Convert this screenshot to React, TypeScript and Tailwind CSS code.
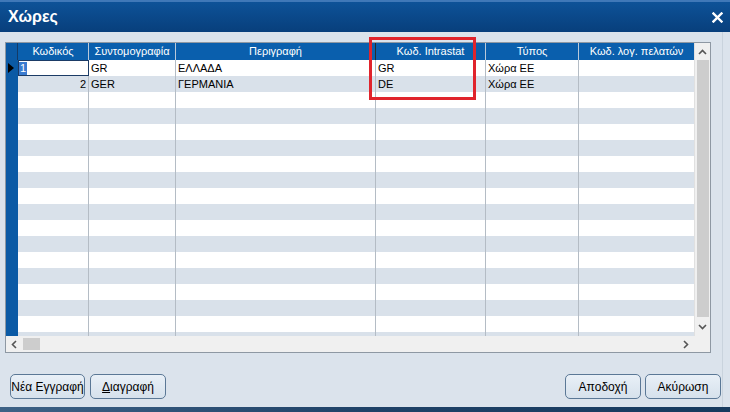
import React from "react";

const cols = [
  { w: 71, title: "Κωδικός" },
  { w: 87, title: "Συντομογραφία" },
  { w: 200, title: "Περιγραφή" },
  { w: 110, title: "Κωδ. Intrastat" },
  { w: 93, title: "Τύπος" },
  { w: 115, title: "Κωδ. λογ. πελατών" },
];

const data: string[][] = [
  ["1", "GR", "ΕΛΛΑΔΑ", "GR", "Χώρα ΕΕ", ""],
  ["2", "GER", "ΓΕΡΜΑΝΙΑ", "DE", "Χώρα ΕΕ", ""],
];

function Btn({ children, w }: { children: React.ReactNode; w: string }) {
  return (
    <div
      className={`${w} h-[25px] rounded-[5px] border border-[#5b7896] bg-gradient-to-b from-[#e9f0f7] to-[#d6e1ec] flex items-center justify-center text-[12px] text-black`}
    >
      {children}
    </div>
  );
}

export default function App() {
  const rows = Array.from({ length: 18 }, (_, i) => i);
  return (
    <div
      className="w-[730px] h-[412px] bg-[#dbe3ec] flex flex-col overflow-hidden"
      style={{ fontFamily: '"Liberation Sans", Arial, sans-serif' }}
    >
      {/* Title bar */}
      <div className="h-[32px] shrink-0 border-t-2 border-[#3f78b8] bg-gradient-to-b from-[#0d5298] to-[#083f7c] flex items-center justify-between pl-[8px] pr-[7px]">
        <span className="text-white font-bold text-[16px] leading-none">Χώρες</span>
        <svg width="11" height="11" viewBox="0 0 11 11">
          <path d="M1.5 1.5 L9.5 9.5 M9.5 1.5 L1.5 9.5" stroke="white" strokeWidth="2.4" strokeLinecap="square" />
        </svg>
      </div>

      {/* Body */}
      <div className="flex-1 flex flex-col pl-[5px] pt-[10px] border-r border-[#c9d3dd] mr-[7px]">
        {/* Grid */}
        <div className="relative w-[706px] h-[311px] border border-[#8e98a3] bg-white flex flex-col">
          <div className="flex h-[293px]">
            <div className="w-[688px] flex flex-col overflow-hidden">
              {/* Header */}
              <div className="flex h-[17px] shrink-0 bg-[#0a5fad] text-white text-[11px]">
                <div className="w-[12px] shrink-0 bg-[#0b5aa5] border-r border-[#143a66]" />
                {cols.map((c, i) => (
                  <div
                    key={i}
                    style={{ width: c.w }}
                    className={`shrink-0 flex items-center justify-center leading-none whitespace-nowrap overflow-hidden ${
                      i < cols.length - 1 ? (i === 2 ? "border-r border-[#2a2a2a]" : "border-r border-[#b9c9da]") : ""
                    }`}
                  >
                    {c.title}
                  </div>
                ))}
              </div>
              {/* Rows */}
              {rows.map((r) => {
                const d = data[r];
                return (
                  <div
                    key={r}
                    className={`flex h-[16px] shrink-0 text-[11px] text-black ${r % 2 === 0 ? "bg-white" : "bg-[#d9e1ea]"}`}
                  >
                    <div className="w-[12px] shrink-0 bg-[#0b5aa5] flex items-center pl-[2px]">
                      {r === 0 && (
                        <svg width="6" height="10" viewBox="0 0 6 10">
                          <path d="M0 0 L6 5 L0 10 Z" fill="black" />
                        </svg>
                      )}
                    </div>
                    {cols.map((c, i) => {
                      const txt = d ? d[i] : "";
                      if (r === 0 && i === 0) {
                        return (
                          <div
                            key={i}
                            style={{ width: c.w }}
                            className="shrink-0 border border-[#1b3b66] flex items-center pl-[0px] bg-white"
                          >
                            <span className="bg-[#3a7bd0] text-white leading-[13px] px-[1px]">{txt}</span>
                          </div>
                        );
                      }
                      return (
                        <div
                          key={i}
                          style={{ width: c.w }}
                          className={`shrink-0 flex items-center leading-none whitespace-nowrap overflow-hidden px-[2px] ${
                            i === 0 ? "justify-end" : "justify-start"
                          } ${i < cols.length - 1 ? "border-r border-[#b4bcc5]" : ""}`}
                        >
                          {txt}
                        </div>
                      );
                    })}
                  </div>
                );
              })}
            </div>
            {/* Vertical scrollbar */}
            <div className="w-[16px] flex flex-col bg-[#f0f0f0] border-l border-[#e0e0e0]">
              <div className="h-[17px] flex items-center justify-center">
                <svg width="9" height="6" viewBox="0 0 9 6">
                  <path d="M1 5 L4.5 1.5 L8 5" stroke="#555" strokeWidth="1.6" fill="none" />
                </svg>
              </div>
              <div className="flex-1 flex justify-center">
                <div className="w-[12px] h-[257px] bg-[#cdcdcd]" />
              </div>
              <div className="h-[18px] flex items-center justify-center">
                <svg width="9" height="6" viewBox="0 0 9 6">
                  <path d="M1 1 L4.5 4.5 L8 1" stroke="#555" strokeWidth="1.6" fill="none" />
                </svg>
              </div>
            </div>
          </div>
          {/* Horizontal scrollbar */}
          <div className="h-[16px] flex bg-[#f0f0f0]">
            <div className="w-[16px] flex items-center justify-center">
              <svg width="6" height="9" viewBox="0 0 6 9">
                <path d="M5 1 L1.5 4.5 L5 8" stroke="#555" strokeWidth="1.6" fill="none" />
              </svg>
            </div>
            <div className="flex items-center pl-[1px]">
              <div className="w-[17px] h-[12px] bg-[#cdcdcd]" />
            </div>
            <div className="flex-1" />
            <div className="w-[16px] flex items-center justify-center">
              <svg width="6" height="9" viewBox="0 0 6 9">
                <path d="M1 1 L4.5 4.5 L1 8" stroke="#555" strokeWidth="1.6" fill="none" />
              </svg>
            </div>
            <div className="w-[16px]" />
          </div>
          {/* Red highlight box */}
          <div className="absolute left-[363px] top-[-6px] w-[107px] h-[63px] border-[3px] border-[#e0242c]" />
        </div>

        {/* Buttons */}
        <div className="flex items-start mt-[21px] pl-[5px] pr-[1px]">
          <Btn w="w-[75px]">Νέα Εγγραφή</Btn>
          <div className="w-[5px]" />
          <Btn w="w-[76px]">
            <span>
              <span className="underline">Δ</span>ιαγραφή
            </span>
          </Btn>
          <div className="flex-1" />
          <Btn w="w-[76px]">Αποδοχή</Btn>
          <div className="w-[4px]" />
          <Btn w="w-[76px]">Ακύρωση</Btn>
        </div>
      </div>
      <div className="h-[5px] shrink-0 bg-gradient-to-r from-[#3e6286] via-[#1f4268] to-[#173a5e]" />
    </div>
  );
}
